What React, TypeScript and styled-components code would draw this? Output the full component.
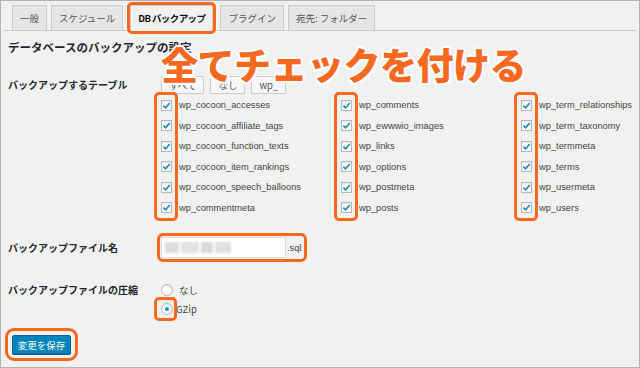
import React from "react";
import styled, { createGlobalStyle, css } from "styled-components";

const GlobalStyle = createGlobalStyle`
  html, body {
    margin: 0;
    padding: 0;
    background: #f1f1f1;
  }
  * {
    box-sizing: border-box;
  }
`;

const ORANGE = "#f9681f";

const marked = css`
  outline: 3px solid ${ORANGE};
  border-radius: 2px;
`;

const JP = `"Noto Sans CJK JP", "Liberation Sans", sans-serif`;
const LATIN = `"Liberation Sans", "Noto Sans CJK JP", sans-serif`;

const Frame = styled.div`
  position: relative;
  width: 640px;
  height: 368px;
  border: 1px solid #b2b2b2;
  background: #f1f1f1;
  font-family: ${JP};
  color: #23282d;
  overflow: hidden;
`;

const TabBar = styled.div`
  display: flex;
  gap: 4px;
  padding: 4px 0 0 8px;
  border-bottom: 1px solid #cccccc;
  margin: 0 3px;
`;

const Tab = styled.div<{ $active?: boolean }>`
  height: 26px;
  line-height: 24px;
  padding: 0 7px;
  margin-bottom: -1px;
  border: 1px solid #cccccc;
  background: ${(p) => (p.$active ? "#f1f1f1" : "#e5e5e5")};
  border-bottom-color: ${(p) => (p.$active ? "#f1f1f1" : "#cccccc")};
  font-size: 9.5px;
  font-weight: ${(p) => (p.$active ? 700 : 400)};
  letter-spacing: ${(p) => (p.$active ? "-0.6px" : "0")};
  color: ${(p) => (p.$active ? "#111" : "#555")};
  white-space: nowrap;
  ${(p) => p.$active && marked}
  ${(p) => p.$active && "margin-left: 3px; margin-right: 3px;"}
`;

const Content = styled.div`
  padding: 0 0 0 7px;
`;

const Heading = styled.h2`
  margin: 8px 0 0;
  font-size: 11.5px;
  line-height: 16px;
  font-weight: 700;
  color: #23282d;
`;

const Annotation = styled.div`
  position: absolute;
  left: 160px;
  top: 40px;
  font-family: ${JP};
  font-size: 37px;
  line-height: 46px;
  font-weight: 900;
  letter-spacing: -0.5px;
  color: ${ORANGE};
  white-space: nowrap;
  text-shadow: 2px 0 0 #fff, -2px 0 0 #fff, 0 2px 0 #fff, 0 -2px 0 #fff,
    1.5px 1.5px 0 #fff, -1.5px 1.5px 0 #fff, 1.5px -1.5px 0 #fff,
    -1.5px -1.5px 0 #fff;
`;

const FormRow = styled.div<{ $top: number }>`
  display: grid;
  grid-template-columns: 153px 1fr;
  margin-top: ${(p) => p.$top}px;
`;

const Label = styled.div<{ $lh?: number }>`
  font-size: 10px;
  font-weight: 700;
  line-height: ${(p) => p.$lh ?? 18}px;
  color: #23282d;
`;

const ButtonRow = styled.div`
  display: flex;
  gap: 5px;
  height: 19px;
`;

const SmallButton = styled.button`
  height: 18px;
  padding: 0 7px;
  border: 1px solid #cccccc;
  border-radius: 2px;
  background: #f7f7f7;
  font-family: ${JP};
  font-size: 9.5px;
  color: #555;
  line-height: 16px;
  & + & {
    margin-left: 1px;
  }
`;

const TableGrid = styled.div`
  display: grid;
  grid-template-columns: 180px 180px 180px;
  margin-left: -4px;
`;

const TableColumn = styled.div`
  display: flex;
`;

const CheckStack = styled.div`
  display: flex;
  flex-direction: column;
  padding: 0 3px 0 4px;
  ${marked}
`;

const NameStack = styled.div`
  display: flex;
  flex-direction: column;
  margin-left: 4px;
`;

const Cell = styled.div`
  height: 20.5px;
  display: flex;
  align-items: center;
`;

const Box = styled.span`
  width: 11px;
  height: 11px;
  border: 1px solid #b4b9be;
  background: #fff;
  box-shadow: inset 0 1px 2px rgba(0, 0, 0, 0.1);
  display: flex;
  align-items: center;
  justify-content: center;
`;

const TableName = styled.span`
  font-family: ${LATIN};
  font-size: 9.3px;
  color: #444;
`;

const FileGroup = styled.div`
  display: flex;
  align-items: center;
  width: fit-content;
  padding-right: 2px;
  ${marked}
  outline-offset: 1px;
`;

const FileInput = styled.div`
  width: 125px;
  height: 21px;
  background: #fff;
  border: 1px solid #dddddd;
  display: flex;
  align-items: center;
  padding-left: 3px;
`;

const Blurred = styled.span`
  display: flex;
  gap: 2px;
  filter: blur(1.2px);
`;

const BlurBlock = styled.span<{ $w: number; $c: string }>`
  width: ${(p) => p.$w}px;
  height: 11px;
  background: ${(p) => p.$c};
`;

const Suffix = styled.span`
  font-family: ${LATIN};
  font-size: 9.3px;
  color: #444;
  margin-left: 1px;
`;

const RadioStack = styled.div`
  display: flex;
  flex-direction: column;
  gap: 1px;
  margin-left: -4px;
`;

const RadioOption = styled.label`
  display: flex;
  align-items: center;
  gap: 5px;
  height: 18px;
  width: fit-content;
`;

const RadioPad = styled.span<{ $marked?: boolean }>`
  display: flex;
  align-items: center;
  height: 18px;
  padding: 0 1px 0 4px;
  ${(p) => p.$marked && marked}
`;

const Radio = styled.span<{ $on?: boolean }>`
  width: 12px;
  height: 12px;
  border-radius: 50%;
  border: 1px solid #b4b9be;
  background: #fff;
  box-shadow: inset 0 1px 2px rgba(0, 0, 0, 0.1);
  display: flex;
  align-items: center;
  justify-content: center;
  &::after {
    content: "";
    width: 4px;
    height: 4px;
    border-radius: 50%;
    background: ${(p) => (p.$on ? "#1e8cbe" : "transparent")};
  }
`;

const RadioText = styled.span<{ $tight?: boolean }>`
  font-size: 9.5px;
  color: #444;
  margin-left: ${(p) => (p.$tight ? -3 : 0)}px;
`;

const SaveButton = styled.button`
  margin: 17px 0 0 4px;
  width: 59px;
  height: 19px;
  padding: 0;
  border: 1px solid #006799;
  border-radius: 2px;
  background: #0085ba;
  box-shadow: 0 1px 0 #006799;
  color: #fff;
  font-family: ${JP};
  font-size: 9.5px;
  ${marked}
  outline-offset: 4px;
`;

const Check = () => (
  <svg width="9" height="9" viewBox="0 0 10 10">
    <path
      d="M1.5 5.2 L4 7.6 L8.6 2.2"
      fill="none"
      stroke="#1e8cbe"
      strokeWidth="1.9"
    />
  </svg>
);

const columns = [
  [
    "wp_cocoon_accesses",
    "wp_cocoon_affiliate_tags",
    "wp_cocoon_function_texts",
    "wp_cocoon_item_rankings",
    "wp_cocoon_speech_balloons",
    "wp_commentmeta",
  ],
  [
    "wp_comments",
    "wp_ewwwio_images",
    "wp_links",
    "wp_options",
    "wp_postmeta",
    "wp_posts",
  ],
  [
    "wp_term_relationships",
    "wp_term_taxonomy",
    "wp_termmeta",
    "wp_terms",
    "wp_usermeta",
    "wp_users",
  ],
];

const tabs = ["一般", "スケジュール", "DB バックアップ", "プラグイン", "宛先: フォルダー"];

export default function App() {
  return (
    <>
      <GlobalStyle />
      <Frame>
        <TabBar>
          {tabs.map((t, i) => (
            <Tab key={t} $active={i === 2}>
              {t}
            </Tab>
          ))}
        </TabBar>
        <Content>
          <Heading>データベースのバックアップの設定</Heading>

          <FormRow $top={21}>
            <Label>バックアップするテーブル</Label>
            <div>
              <ButtonRow>
                <SmallButton>すべて</SmallButton>
                <SmallButton>なし</SmallButton>
                <SmallButton>wp_</SmallButton>
              </ButtonRow>
              <TableGrid>
                {columns.map((col, ci) => (
                  <TableColumn key={ci}>
                    <CheckStack>
                      {col.map((name) => (
                        <Cell key={name}>
                          <Box>
                            <Check />
                          </Box>
                        </Cell>
                      ))}
                    </CheckStack>
                    <NameStack>
                      {col.map((name) => (
                        <Cell key={name}>
                          <TableName>{name}</TableName>
                        </Cell>
                      ))}
                    </NameStack>
                  </TableColumn>
                ))}
              </TableGrid>
            </div>
          </FormRow>

          <FormRow $top={19}>
            <Label $lh={21}>バックアップファイル名</Label>
            <FileGroup>
              <FileInput>
                <Blurred>
                  <BlurBlock $w={14} $c="#dcdcdc" />
                  <BlurBlock $w={18} $c="#e2e2e2" />
                  <BlurBlock $w={12} $c="#d8d8d8" />
                  <BlurBlock $w={16} $c="#e0e0e0" />
                </Blurred>
              </FileInput>
              <Suffix>.sql</Suffix>
            </FileGroup>
          </FormRow>

          <FormRow $top={23}>
            <Label>バックアップファイルの圧縮</Label>
            <RadioStack>
              <RadioOption>
                <RadioPad>
                  <Radio />
                </RadioPad>
                <RadioText>なし</RadioText>
              </RadioOption>
              <RadioOption>
                <RadioPad $marked>
                  <Radio $on />
                </RadioPad>
                <RadioText $tight>GZip</RadioText>
              </RadioOption>
            </RadioStack>
          </FormRow>

          <SaveButton>変更を保存</SaveButton>
        </Content>
        <Annotation>全てチェックを付ける</Annotation>
      </Frame>
    </>
  );
}
